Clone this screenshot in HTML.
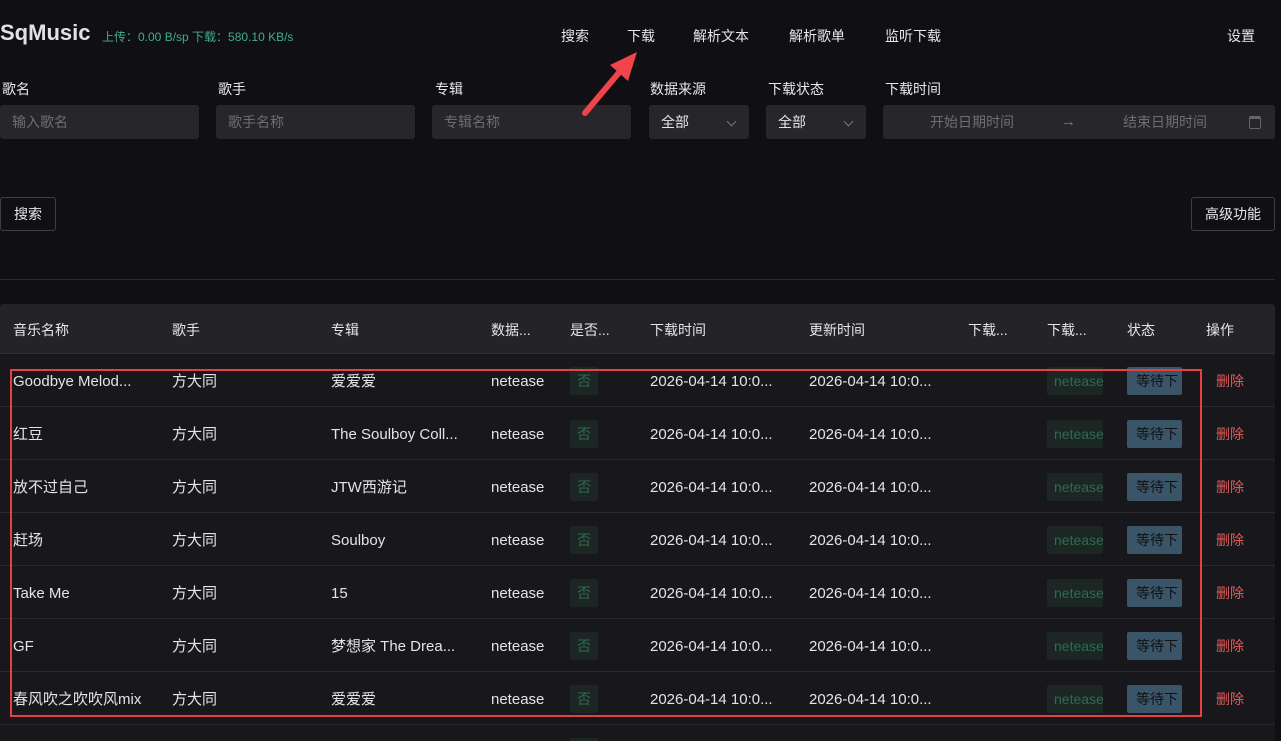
<!DOCTYPE html>
<html style="width:1281px;height:741px;overflow:hidden"><head><meta charset="utf-8"><style>
*{box-sizing:border-box;margin:0;padding:0}
body{width:1281px;height:741px;overflow:hidden;background:#101014;color:#e6e6e8;font-family:"Liberation Sans","Noto Sans CJK SC",sans-serif;font-size:14px;position:relative}
.a{position:absolute;white-space:nowrap}
.lbl{font-size:14px;color:#e8e8ea}
.inp{position:absolute;top:105px;height:34px;background:#27272b;border-radius:3px;color:#6d6d72;font-size:14px;line-height:34px;padding-left:12px}
.btn{position:absolute;height:34px;border:1px solid #3e3e44;border-radius:3px;line-height:32px;text-align:center;font-size:14px;color:#e6e6e8;background:#101014}
.row{position:absolute;left:0;width:1275px;height:53px;background:#18181c;border-bottom:1px solid #2a2a2e}
.row .a{top:0;line-height:55px;font-size:15px;color:#e4e4e6}
.tag{position:absolute;top:13px;height:28px;border-radius:2px;line-height:28px;font-size:14px;overflow:hidden}
.chev{position:absolute;right:14px;top:13px;width:7px;height:7px;border-right:1px solid #777;border-bottom:1px solid #777;transform:rotate(45deg)}
</style></head><body>
<div class="a" style="left:0;top:20px;font-size:22px;font-weight:bold;color:#e2e2e4">SqMusic</div>
<div class="a" style="left:102px;top:28px;font-size:12px;color:#3fae86">上传：0.00 B/sp 下载：580.10 KB/s</div>
<div class="a" style="left:561px;top:26px;font-size:14px">搜索</div>
<div class="a" style="left:627px;top:26px;font-size:14px">下载</div>
<div class="a" style="left:693px;top:26px;font-size:14px">解析文本</div>
<div class="a" style="left:789px;top:26px;font-size:14px">解析歌单</div>
<div class="a" style="left:885px;top:26px;font-size:14px">监听下载</div>
<div class="a" style="left:1227px;top:26px;font-size:14px">设置</div>

<div class="a lbl" style="left:2px;top:79px">歌名</div>
<div class="a lbl" style="left:218px;top:79px">歌手</div>
<div class="a lbl" style="left:435px;top:79px">专辑</div>
<div class="a lbl" style="left:650px;top:79px">数据来源</div>
<div class="a lbl" style="left:768px;top:79px">下载状态</div>
<div class="a lbl" style="left:885px;top:79px">下载时间</div>
<div class="inp" style="left:0;width:199px">输入歌名</div>
<div class="inp" style="left:216px;width:199px">歌手名称</div>
<div class="inp" style="left:432px;width:199px">专辑名称</div>
<div class="inp" style="left:649px;width:100px;color:#e6e6e8">全部<span class="chev"></span></div>
<div class="inp" style="left:766px;width:100px;color:#e6e6e8">全部<span class="chev"></span></div>
<div class="inp" style="left:883px;width:392px;padding:0">
<span class="a" style="left:47px">开始日期时间</span><span class="a" style="left:178px;color:#777;font-size:15px">→</span><span class="a" style="left:240px">结束日期时间</span>
<span class="a" style="left:366px;top:11px;width:12px;height:13px;border:1.5px solid #666;border-radius:2px;border-top-width:3px"></span></div>

<div class="btn" style="left:0;top:197px;width:56px">搜索</div>
<div class="btn" style="left:1191px;top:197px;width:84px">高级功能</div>
<div class="a" style="left:0;top:279px;width:1275px;height:1px;background:#2a2a2e"></div>

<div class="a" style="left:0;top:304px;width:1275px;height:50px;background:#242428;border-radius:4px 4px 0 0;border-bottom:1px solid #2e2e32"></div>
<div class="a" style="left:13px;top:320px">音乐名称</div>
<div class="a" style="left:172px;top:320px">歌手</div>
<div class="a" style="left:331px;top:320px">专辑</div>
<div class="a" style="left:491px;top:320px">数据...</div>
<div class="a" style="left:570px;top:320px">是否...</div>
<div class="a" style="left:650px;top:320px">下载时间</div>
<div class="a" style="left:809px;top:320px">更新时间</div>
<div class="a" style="left:968px;top:320px">下载...</div>
<div class="a" style="left:1047px;top:320px">下载...</div>
<div class="a" style="left:1127px;top:320px">状态</div>
<div class="a" style="left:1206px;top:320px">操作</div>

<div id="rows"></div>
<script>
var d=[["Goodbye Melod...","爱爱爱"],["红豆","The Soulboy Coll..."],["放不过自己","JTW西游记"],["赶场","Soulboy"],["Take Me","15"],["GF","梦想家 The Drea..."],["春风吹之吹吹风mix","爱爱爱"]];
var h="";d.forEach(function(r,i){var t=354+i*53;h+='<div class="row" style="top:'+t+'px">'+
'<span class="a" style="left:13px">'+r[0]+'</span>'+
'<span class="a" style="left:172px">方大同</span><span class="a" style="left:331px">'+r[1]+'</span><span class="a" style="left:491px">netease</span>'+
'<span class="a" style="left:650px">2026-04-14 10:0...</span><span class="a" style="left:809px">2026-04-14 10:0...</span>'+
'<span class="a" style="left:1216px;color:#e05a5a;font-size:14px">删除</span>'+
'<div class="tag" style="left:1047px;width:56px;background:#1c2623;color:#2f6a52;padding-left:7px">netease</div>'+
'<div class="tag" style="left:1127px;width:55px;background:#3a5568;color:#111;padding-left:9px">等待下载</div>'+
'<div class="tag" style="left:570px;width:28px;background:#1c2623;color:#2f6a52;text-align:center">否</div></div>'});
document.getElementById("rows").innerHTML=h;
</script>
<div class="a" style="left:0;top:725px;width:1275px;height:16px;background:#18181c;overflow:hidden"><div class="a" style="left:570px;top:13px;width:28px;height:10px;background:#1c2623"></div></div>

<div class="a" style="left:10px;top:369px;width:1192px;height:348px;border:2.5px solid #e84040"></div>
<svg class="a" style="left:570px;top:45px" width="80" height="80" viewBox="0 0 80 80">
<line x1="15" y1="68" x2="52" y2="24" stroke="#f0444a" stroke-width="6" stroke-linecap="round"/>
<polygon points="67,7 40,20 58,36" fill="#f0444a"/>
</svg>
</body></html>
